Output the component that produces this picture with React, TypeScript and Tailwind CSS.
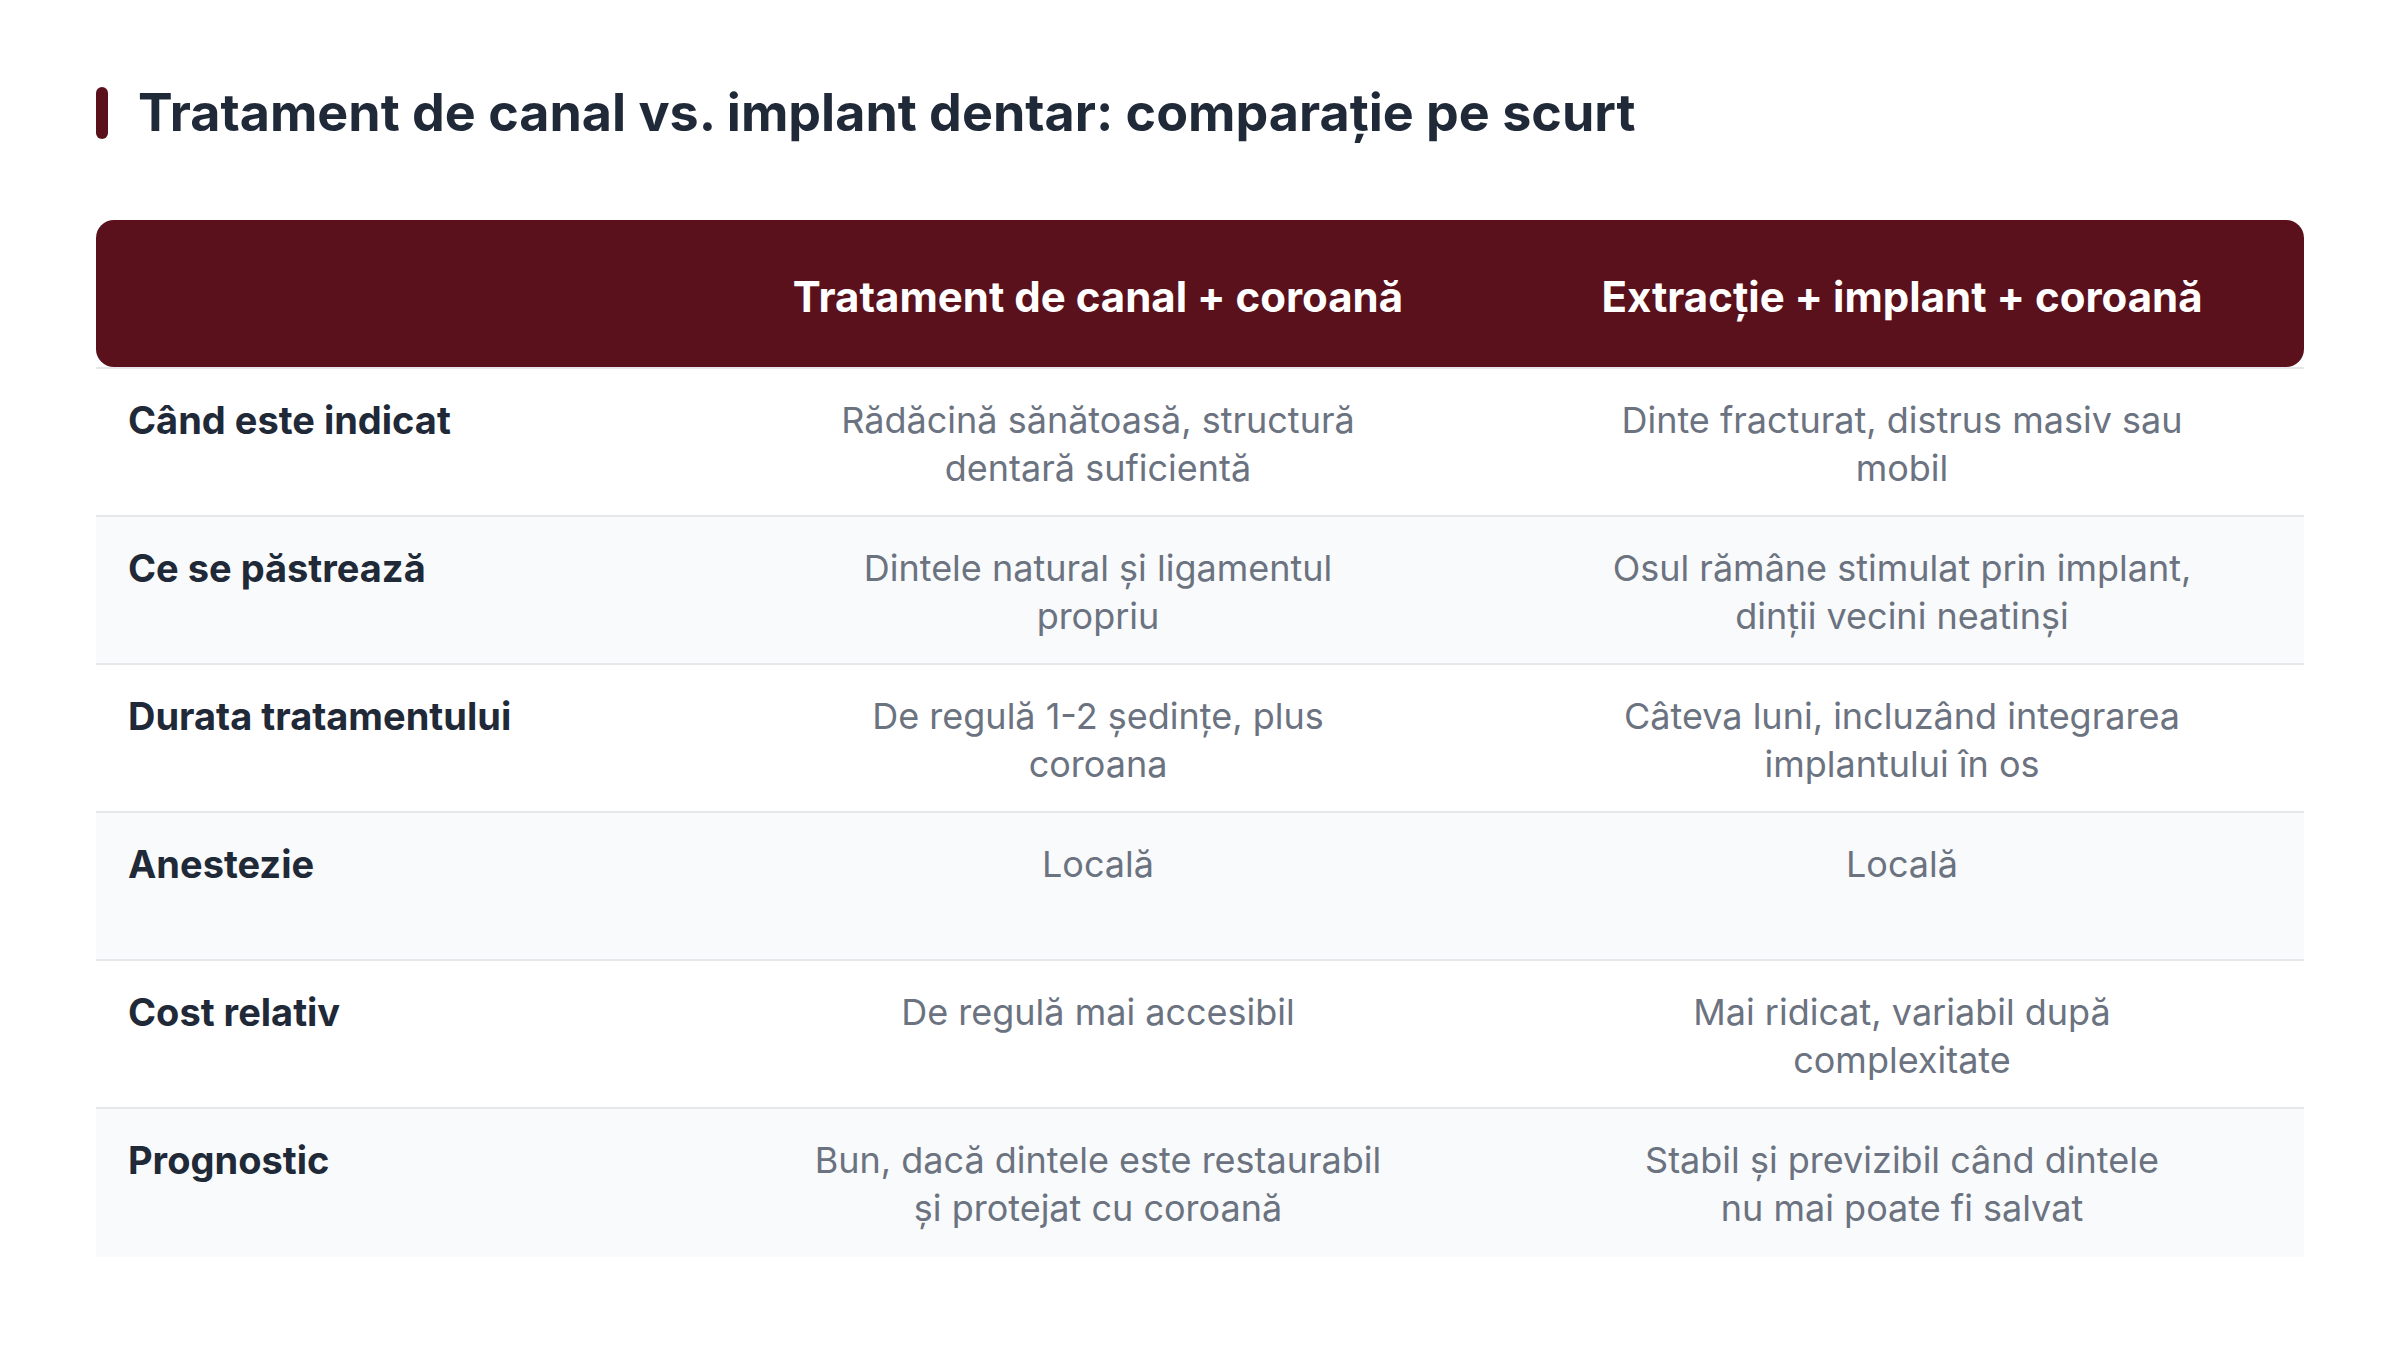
const rows = [
  {
    label: 'Când este indicat',
    canal: 'Rădăcină sănătoasă, structură dentară suficientă',
    implant: 'Dinte fracturat, distrus masiv sau mobil',
  },
  {
    label: 'Ce se păstrează',
    canal: 'Dintele natural și ligamentul propriu',
    implant: 'Osul rămâne stimulat prin implant, dinții vecini neatinși',
  },
  {
    label: 'Durata tratamentului',
    canal: 'De regulă 1-2 ședințe, plus coroana',
    implant: 'Câteva luni, incluzând integrarea implantului în os',
  },
  {
    label: 'Anestezie',
    canal: 'Locală',
    implant: 'Locală',
  },
  {
    label: 'Cost relativ',
    canal: 'De regulă mai accesibil',
    implant: 'Mai ridicat, variabil după complexitate',
  },
  {
    label: 'Prognostic',
    canal: 'Bun, dacă dintele este restaurabil și protejat cu coroană',
    // keep "nu mai" together
    implant: 'Stabil și previzibil când dintele nu\u00a0mai poate fi salvat',
  },
];

export default function App() {
  return (
    <div className="min-h-screen bg-white px-24 pt-[87px] font-['Inter',sans-serif]">
      {/* Title */}
      <div className="flex items-center gap-[30px]">
        <div className="h-[52px] w-3 rounded-full bg-[#5b111b]" />
        <h1 className="text-[52px] font-bold leading-none text-[#1f2937]">
          Tratament de canal vs. implant dentar: comparație pe scurt
        </h1>
      </div>

      {/* Table */}
      <div className="mt-[81px]">
        <div className="border-b-2 border-[#e5e7eb]">
          <div className="grid h-[147px] grid-cols-[600px_1fr_1fr] items-center rounded-[18px] bg-[#5b111b] pt-[6px] text-[42px] font-bold text-white">
            <div />
            <div className="text-center">Tratament de canal + coroană</div>
            <div className="text-center">Extracție + implant + coroană</div>
          </div>
        </div>

        {rows.map((row, i) => (
          <div
            key={row.label}
            className={`grid h-[148px] grid-cols-[600px_1fr_1fr] leading-[48px] ${
              i % 2 === 1 ? 'bg-[#f9fafb]' : 'bg-white'
            } ${i < rows.length - 1 ? 'border-b-2 border-[#e5e7eb]' : ''}`}
          >
            <div className="px-8 pt-[27px] text-[38px] font-bold text-[#1f2937]">{row.label}</div>
            <div className="px-8 pt-[27px] text-[36px] text-[#6b7280]">
              <p className="mx-auto max-w-[590px] text-center">{row.canal}</p>
            </div>
            <div className="px-8 pt-[27px] text-[36px] text-[#6b7280]">
              <p className="mx-auto max-w-[590px] text-center">{row.implant}</p>
            </div>
          </div>
        ))}
      </div>
    </div>
  );
}
